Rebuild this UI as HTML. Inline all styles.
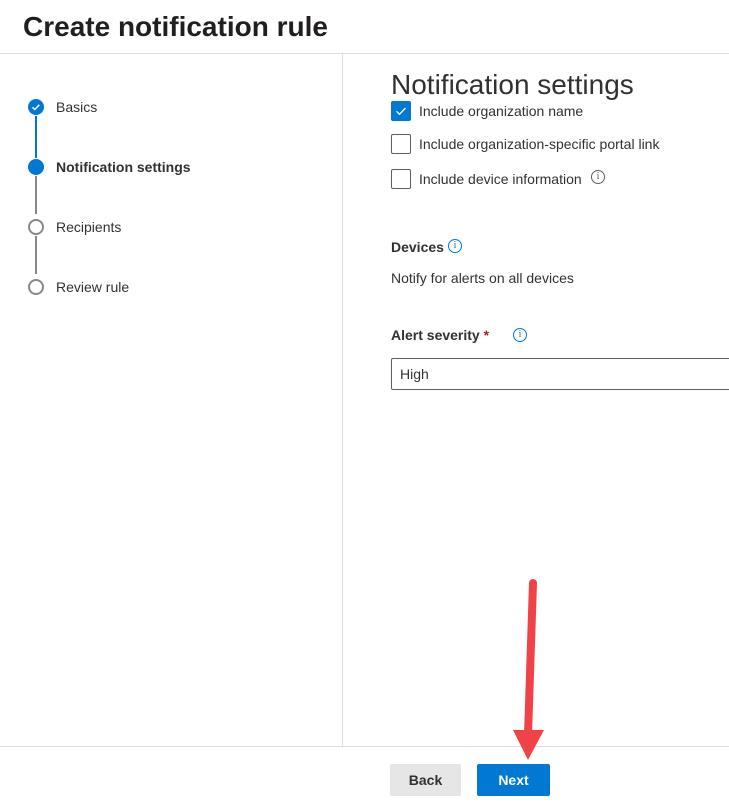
<!DOCTYPE html>
<html><head><style>
body{margin:0;width:729px;height:810px;overflow:hidden;background:#fff;font-family:"Liberation Sans",sans-serif;color:#323130;position:relative}
.a{position:absolute}
.t{font-size:14px;line-height:16px;white-space:nowrap}
.cb{position:absolute;left:391px;width:18px;height:18px;border:1px solid #605e5c;border-radius:2px}
.info{position:absolute;width:12px;height:12px;border:1px solid #0078d4;border-radius:50%;font-size:10px;line-height:12px;text-align:center;color:#0078d4;font-family:"Liberation Serif",serif}
</style></head><body>
<div class="a" style="left:23px;top:11px;font-size:28px;font-weight:bold;color:#201f1e;white-space:nowrap">Create notification rule</div>
<div class="a" style="left:0;top:53px;width:729px;height:1px;background:#e1dfdd"></div>
<div class="a" style="left:342px;top:54px;width:1px;height:692px;background:#e1dfdd"></div>
<div class="a" style="left:0;top:746px;width:729px;height:1px;background:#e1dfdd"></div>

<div class="a" style="left:35px;top:116px;width:2px;height:42px;background:#0078d4"></div>
<div class="a" style="left:35px;top:176px;width:2px;height:38px;background:#8a8886"></div>
<div class="a" style="left:35px;top:236px;width:2px;height:38px;background:#8a8886"></div>
<div class="a" style="left:28px;top:99px;width:16px;height:16px;border-radius:50%;background:#0078d4"></div>
<svg class="a" style="left:28px;top:99px" width="16" height="16"><path d="M4.5 8.3l2.3 2.2 4.5-4.7" stroke="#fff" stroke-width="1.5" fill="none"/></svg>
<div class="a" style="left:28px;top:159px;width:16px;height:16px;border-radius:50%;background:#0078d4"></div>
<div class="a" style="left:28px;top:219px;width:12px;height:12px;border-radius:50%;border:2px solid #8a8886"></div>
<div class="a" style="left:28px;top:279px;width:12px;height:12px;border-radius:50%;border:2px solid #8a8886"></div>
<div class="a t" style="left:56px;top:99px">Basics</div>
<div class="a t" style="left:56px;top:159px;font-weight:bold">Notification settings</div>
<div class="a t" style="left:56px;top:219px">Recipients</div>
<div class="a t" style="left:56px;top:279px">Review rule</div>

<div class="a" style="left:391px;top:69px;font-size:28px;color:#323130;white-space:nowrap">Notification settings</div>
<div class="cb" style="top:101px;background:#0078d4;border-color:#0078d4"></div>
<svg class="a" style="left:391px;top:101px" width="20" height="20"><path d="M5.5 10.3l3 3 6-6.3" stroke="#fff" stroke-width="1.3" fill="none"/></svg>
<div class="a t" style="left:419px;top:103px">Include organization name</div>
<div class="cb" style="top:134px"></div>
<div class="a t" style="left:419px;top:136px">Include organization-specific portal link</div>
<div class="cb" style="top:169px"></div>
<div class="a t" style="left:419px;top:171px">Include device information</div>
<div class="info" style="left:591px;top:170px;border-color:#605e5c;color:#605e5c">i</div>
<div class="a t" style="left:391px;top:239px;font-weight:bold;color:#323130">Devices</div>
<div class="info" style="left:448px;top:239px">i</div>
<div class="a t" style="left:391px;top:270px">Notify for alerts on all devices</div>
<div class="a t" style="left:391px;top:327px;font-weight:bold">Alert severity <span style="color:#a4262c">*</span></div>
<div class="info" style="left:513px;top:328px">i</div>
<div class="a" style="left:391px;top:358px;width:340px;height:30px;border:1px solid #605e5c;border-radius:2px"></div>
<div class="a t" style="left:400px;top:366px">High</div>

<div class="a" style="left:390px;top:764px;width:71px;height:32px;background:#e6e6e6;border-radius:2px;font-size:14px;font-weight:bold;line-height:32px;text-align:center;color:#323130">Back</div>
<div class="a" style="left:477px;top:764px;width:73px;height:32px;background:#0078d4;border-radius:2px;font-size:14px;font-weight:bold;line-height:32px;text-align:center;color:#fff">Next</div>

<svg class="a" style="left:500px;top:570px" width="60" height="200">
<line x1="33" y1="13" x2="28" y2="165" stroke="#f04348" stroke-width="8" stroke-linecap="round"/>
<path d="M13 160L44 160L28 190Z" fill="#f04348"/>
</svg>
</body></html>
